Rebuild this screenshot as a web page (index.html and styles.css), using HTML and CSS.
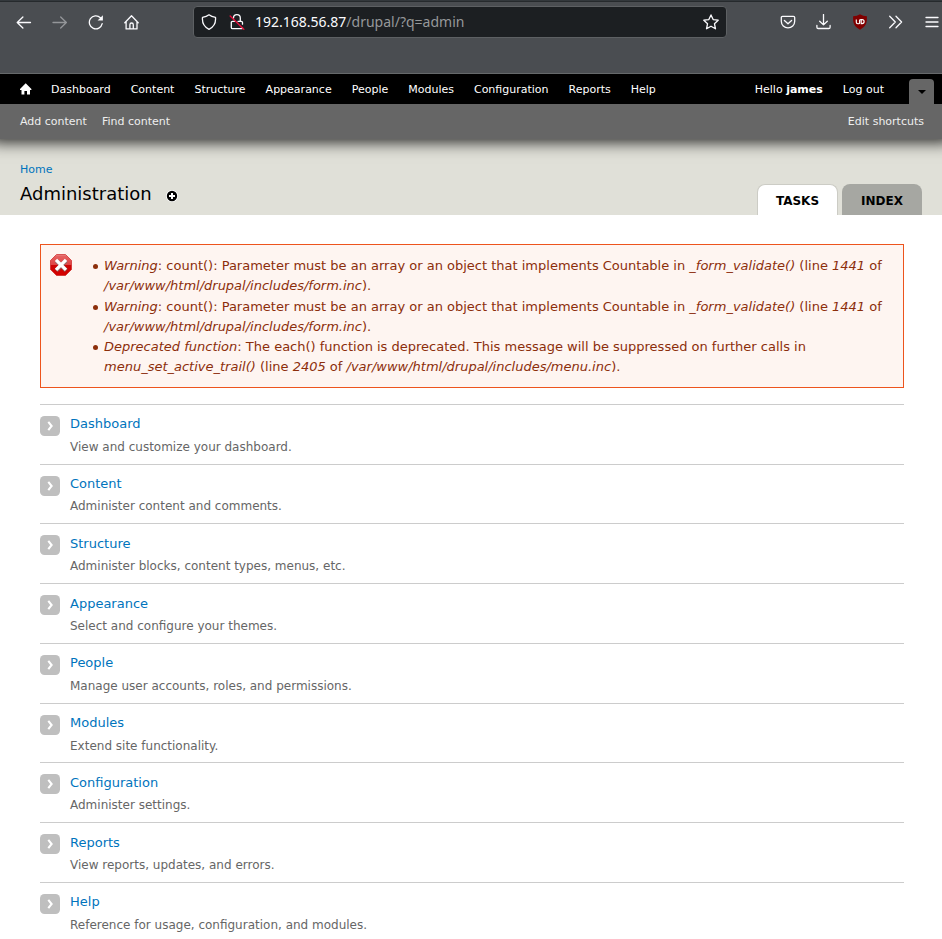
FILE: index.html
```html
<!DOCTYPE html>
<html lang="en">
<head>
<meta charset="utf-8">
<title>Administration</title>
<link rel="stylesheet" href="styles.css">
</head>
<body>
<svg width="0" height="0" class="defs">
  <symbol id="arrow" viewBox="0 0 20 20"><rect width="20" height="20" rx="4.5" fill="#bfbfbf"/><path d="M8.300 5.900 L11.600 10 L8.300 14.100" fill="none" stroke="#fff" stroke-width="2.1"/></symbol>
</svg>
<header class="browser">
  <div class="nav">
    <svg class="ic" viewBox="0 0 16 16"><path d="M14.500 8.500H1.200M6.900 3L1.200 8.500l5.700 5.500"/></svg>
    <svg class="ic dim" viewBox="0 0 16 16"><path d="M1 8.500h13.400M8.700 3l5.700 5.500L8.700 14"/></svg>
    <svg class="ic" viewBox="0 0 16 16"><path d="M14.200 9.700A6.500 6.500 0 1 1 12.400 3.700"/><path class="solid" d="M14.900 1.200V6.500H9.600Z"/></svg>
    <svg class="ic" viewBox="0 0 16 16"><path d="M.8 8.700L7.500 1.800l6.700 6.900M2.100 7.500v7.400h10.900V7.500M5.900 14.800V10.700a1.700 1.700 0 0 1 3.400 0v4.100"/></svg>
  </div>
  <div class="url">
    <svg class="ic shield" viewBox="0 0 16 16"><path d="M8 .8C10 2.4 12 3 14.5 3.4C15 8.500 13 13 8 15.300C3 13 1 8.500 1.500 3.400C4 3 6 2.400 8 .8Z"/></svg>
    <svg class="ic lock" viewBox="0 0 16 16"><path d="M4.500 4.300V4.100a3.400 3.400 0 0 1 6.800 0V7.300M9 7.300h3.300q1.200 0 1.200 1.200v1.700M5.500 7.300h-2q-1.200 0-1.200 1.200v5q0 1.200 1.200 1.200h8.800q.9 0 1.200-.6"/><path class="slash" d="M1.200 2l13.600 13.200"/></svg>
    <span class="address"><b>192.168.56.87</b>/drupal/?q=admin</span>
    <svg class="ic star" viewBox="0 0 16 16"><path d="M8 .9l2.150 4.700 5.050.6-3.750 3.450 1 5.100L8 12.200l-4.450 2.550 1-5.100L.8 6.200l5.050-.6z"/></svg>
  </div>
  <div class="tools">
    <svg class="ic" viewBox="0 0 16 16"><path d="M2.500 2.300h11q1.200 0 1.200 1.200v3.700a6.700 6.700 0 0 1-13.400 0V3.500q0-1.200 1.200-1.200zM4.400 6.500L8 9.800l3.600-3.300"/></svg>
    <svg class="ic" viewBox="0 0 16 16"><path d="M7.500 .5v10.300M3.700 7.200L7.500 10.900l3.800-3.700M.9 11.500v1.700q0 1.300 1.300 1.300h10.600q1.300 0 1.300-1.300v-1.700"/></svg>
    <svg class="ublock" viewBox="0 0 16 16"><path fill="#800000" d="M8 .3c2 1.400 4.300 1.700 6.900 1.900C15.100 8.500 14.500 12 8 15.700C1.500 12 .9 8.500 1.100 2.200C3.700 2 6 1.700 8 .3z"/><path fill="none" stroke="#fff" stroke-width="1.150" d="M4.300 5.500v2.800q0 1.400 1.500 1.400h.8q1 0 1-1V5.500M8.200 5.600h1.900q2 0 2 2t-2 2H9.200V6"/></svg>
    <svg class="ic" viewBox="0 0 16 16"><path d="M1.700 2.300L7.300 8l-5.600 5.700M8 2.300L13.600 8 8 13.700"/></svg>
    <svg class="ic" viewBox="0 0 16 16"><path d="M2 3.500h12M2 8h12M2 12.500h12"/></svg>
  </div>
</header>

<div class="toolbar">
  <nav class="menu">
    <a class="home"><svg viewBox="0 0 12 12"><path fill="#fff" d="M5.700 .3L11.400 6v1H10v4.500H7V8H4.400v3.500H1.500V7H0V6z"/></svg></a>
    <a>Dashboard</a><a>Content</a><a>Structure</a><a>Appearance</a><a>People</a><a>Modules</a><a>Configuration</a><a>Reports</a><a>Help</a>
    <div class="user"><a>Hello <strong>james</strong></a><a>Log out</a><span class="toggle"><i></i></span></div>
  </nav>
  <div class="drawer"><a>Add content</a><a>Find content</a><a class="edit">Edit shortcuts</a></div>
</div>

<div class="branding">
  <div>
    <a class="crumb">Home</a>
    <h1>Administration <svg viewBox="0 0 12 12"><circle cx="6" cy="6" r="6" fill="#fff"/><circle cx="6" cy="6" r="5.200"/><path d="M6 3v6M3 6h6" stroke="#fff" stroke-width="2"/></svg></h1>
  </div>
  <ul class="tabs"><li class="active">Tasks</li><li>Index</li></ul>
</div>

<main>
  <section class="messages">
    <svg viewBox="0 0 22 22"><defs><linearGradient id="red" x2="0" y2="1"><stop stop-color="#e89090"/><stop offset=".08" stop-color="#e56060"/><stop offset=".49" stop-color="#df4444"/><stop offset=".5" stop-color="#cc0505"/><stop offset="1" stop-color="#d40000"/></linearGradient></defs><path fill="url(#red)" stroke="#c22" stroke-width=".7" d="M6.500 .5h9l6 6v9l-6 6h-9l-6-6v-9z"/><path d="M6.200 6.500l10 10M16.200 6.500L6.200 16.500" stroke="#777" stroke-opacity=".7" stroke-width="4.300"/><path d="M6 5.800l10 10M16 5.800L6 15.800" stroke="#fff" stroke-width="3.300"/></svg>
    <ul>
      <li><em>Warning</em>: count(): Parameter must be an array or an object that implements Countable in <em>_form_validate()</em> (line <em>1441</em> of <em>/var/www/html/drupal/includes/form.inc</em>).</li>
      <li><em>Warning</em>: count(): Parameter must be an array or an object that implements Countable in <em>_form_validate()</em> (line <em>1441</em> of <em>/var/www/html/drupal/includes/form.inc</em>).</li>
      <li><em>Deprecated function</em>: The each() function is deprecated. This message will be suppressed on further calls in <em>menu_set_active_trail()</em> (line <em>2405</em> of <em>/var/www/html/drupal/includes/menu.inc</em>).</li>
    </ul>
  </section>
  <ul class="admin">
    <li><svg><use href="#arrow"/></svg><div><a>Dashboard</a><p>View and customize your dashboard.</p></div></li>
    <li><svg><use href="#arrow"/></svg><div><a>Content</a><p>Administer content and comments.</p></div></li>
    <li><svg><use href="#arrow"/></svg><div><a>Structure</a><p>Administer blocks, content types, menus, etc.</p></div></li>
    <li><svg><use href="#arrow"/></svg><div><a>Appearance</a><p>Select and configure your themes.</p></div></li>
    <li><svg><use href="#arrow"/></svg><div><a>People</a><p>Manage user accounts, roles, and permissions.</p></div></li>
    <li><svg><use href="#arrow"/></svg><div><a>Modules</a><p>Extend site functionality.</p></div></li>
    <li><svg><use href="#arrow"/></svg><div><a>Configuration</a><p>Administer settings.</p></div></li>
    <li><svg><use href="#arrow"/></svg><div><a>Reports</a><p>View reports, updates, and errors.</p></div></li>
    <li><svg><use href="#arrow"/></svg><div><a>Help</a><p>Reference for usage, configuration, and modules.</p></div></li>
  </ul>
</main>
</body>
</html>
```
FILE: styles.css
```css
* { box-sizing: border-box; }
html { overflow: hidden; }
body { margin: 0; height: 939px; overflow: hidden; background: #fff; font: 13px/20px "DejaVu Sans", sans-serif; }
ul { list-style: none; margin: 0; padding: 0; }
svg { display: block; flex: none; }
.defs { position: absolute; }

.browser { height: 74px; background: #4a4d51; border-top: 1px solid #33383c; box-shadow: inset 0 1px #262a2d; border-bottom: 1px solid #66696b; display: flex; align-items: flex-start; padding: 5px 2px 0 16px; }
.nav { display: flex; gap: 20px; padding-top: 8px; width: 177px; }
.ic { width: 16px; height: 16px; fill: none; stroke: #fbfbfe; stroke-width: 1.3; stroke-linecap: round; stroke-linejoin: round; }
.ic .solid { fill: #fbfbfe; stroke: none; }
.ic .slash { stroke: #e5103c; stroke-width: 1.4; }
.dim { opacity: .42; }
.url { width: 534px; height: 32px; background: #1c1f22; border: 1px solid #5d6063; border-radius: 4px; display: flex; align-items: center; padding: 0 7px; }
.lock { margin-left: 12px; }
.address { margin-left: 10px; flex: 1; font: 14px/20px "Noto Sans", sans-serif; color: #96989a; }
.address b { font-weight: 400; color: #fbfbfe; }
.tools { display: flex; gap: 20px; padding-top: 8px; margin-left: 53px; }
.ublock { width: 16px; height: 16px; }

.toolbar { position: relative; margin: 0 -10px; font-size: 11px; color: #fff; box-shadow: 0 3px 15px rgba(0, 0, 0, .85); clip-path: inset(0 0 -40px); }
.menu { height: 30px; background: #000; display: flex; align-items: center; padding: 0 18px 0 20px; }
.menu a { padding: 1px 10px 0; }
.home svg { width: 12px; height: 12px; }
.menu .home { margin-right: -1px; padding-top: 0; }
.user { margin-left: auto; display: flex; align-items: center; height: 30px; }
.toggle { width: 25px; height: 25px; align-self: flex-end; margin-left: 15px; background: #666; border-radius: 4px 4px 0 0; display: flex; align-items: center; justify-content: center; }
.toggle i { border: 4px solid transparent; border-top-color: #000; border-bottom: 0; margin-top: 1px; }
.drawer { height: 35px; background: #666; display: flex; gap: 15px; padding: 8px 28px 0 30px; color: #eee; }
.edit { margin-left: auto; }

.branding { height: 76px; background: #e0e0d8; display: flex; justify-content: space-between; padding: 21px 20px 0; }
.crumb { display: block; position: relative; font-size: 11px; color: #0074bd; }
h1 { margin: 3px 0 0; font-weight: 400; font-size: 18px; line-height: 22px; display: flex; color: #000; }
h1 svg { width: 12px; height: 12px; margin: 7px 0 0 14px; }
.tabs { display: flex; gap: 4px; align-self: flex-end; }
.tabs li { width: 80px; height: 31px; border-radius: 8px 8px 0 0; background: #a6a7a2; font: bold 12px/34px "DejaVu Sans", sans-serif; text-transform: uppercase; text-align: center; color: #000; }
.tabs .active { width: 81px; background: #fff; border: 1px solid #ccccc5; border-bottom: 0; line-height: 32px; }

main { padding: 29px 38px 0 40px; }
.messages { height: 144px; border: 1px solid #ed541d; background: #fef5f1; color: #8c2e0b; display: flex; padding: 9px 14px 0 9px; }
.messages ul { padding: 2.2px 0 0 32px; }
.messages li { height: 40.4px; }
.messages li::before { content: ""; float: left; width: 5px; height: 5px; border-radius: 50%; background: #8c2e0b; margin: 8px 0 0 -11px; }
.messages svg { width: 22px; height: 22px; }
.admin { margin-top: 15.8px; }
.admin li { height: 59.77px; border-top: 1px solid #ccc; display: flex; padding-top: 9.46px; }
.admin svg { width: 20px; height: 20px; margin: 1.54px 10px 0 0; }
.admin a { display: block; color: #0074bd; }
.admin p { margin: 2.43px 0 0; font-size: 12px; color: #666; }
```
